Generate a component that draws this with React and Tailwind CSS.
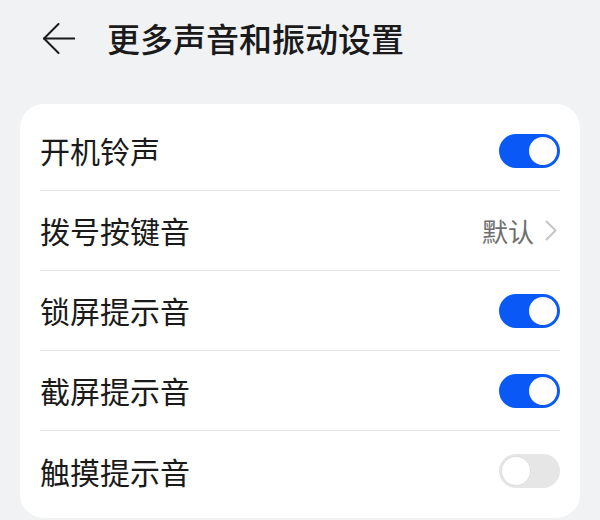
import React, { useState } from 'react';

const rows = [
  { label: '开机铃声', type: 'toggle', on: true },
  { label: '拨号按键音', type: 'link', value: '默认' },
  { label: '锁屏提示音', type: 'toggle', on: true },
  { label: '截屏提示音', type: 'toggle', on: true },
  { label: '触摸提示音', type: 'toggle', on: false },
];

const Toggle = ({ on, onClick }) => (
  <button
    onClick={onClick}
    className={`w-[61px] h-[34px] rounded-full flex items-center p-[3px] ${
      on ? 'bg-[#0a59f7] justify-end' : 'bg-[#e6e6e6] justify-start'
    }`}
  >
    <span
      className={`block w-[28px] h-[28px] rounded-full bg-white ${
        on ? '' : 'shadow-[0_0_0_1px_#dedede]'
      }`}
    />
  </button>
);

export default function App() {
  const [state, setState] = useState(rows.map(r => !!r.on));

  const toggle = (i) => {
    const next = [...state];
    next[i] = !next[i];
    setState(next);
  };

  return (
    <div
      className="w-[600px] h-[520px] bg-[#f1f2f4] overflow-hidden"
      style={{ fontFamily: '"Noto Sans CJK SC", "Noto Sans", sans-serif' }}
    >
      <div className="h-[76px] flex items-center pl-[43px]">
        <svg width="32" height="31" viewBox="0 0 32 31" fill="none" stroke="#1a1a1a" strokeWidth="2" strokeLinecap="round" strokeLinejoin="round">
          <path d="M15.5 1 L1 15.5 L15.5 30" />
          <path d="M1 15.5 H31.5" />
        </svg>
        <h1 className="ml-[32px] text-[33px] font-medium text-[#1a1a1a] leading-none">更多声音和振动设置</h1>
      </div>

      <div className="mx-5 mt-[28px] bg-white rounded-[24px] px-5 py-[7px]">
        {rows.map((row, i) => (
          <div
            key={row.label}
            className={`h-[80px] flex items-center justify-between ${
              i < rows.length - 1 ? 'border-b border-[#e3e3e3]' : ''
            }`}
          >
            <span className="text-[30px] text-[#1a1a1a]">{row.label}</span>
            {row.type === 'toggle' ? (
              <Toggle on={state[i]} onClick={() => toggle(i)} />
            ) : (
              <div className="flex items-center gap-[11px] pr-[3px]">
                <span className="text-[26px] text-[#6e6e6e]">{row.value}</span>
                <svg width="12" height="21" viewBox="0 0 12 21" fill="none" stroke="#c4c4c4" strokeWidth="1.8" strokeLinecap="round" strokeLinejoin="round">
                  <path d="M1.5 1.5 L10.5 10.5 L1.5 19.5" />
                </svg>
              </div>
            )}
          </div>
        ))}
      </div>
    </div>
  );
}
